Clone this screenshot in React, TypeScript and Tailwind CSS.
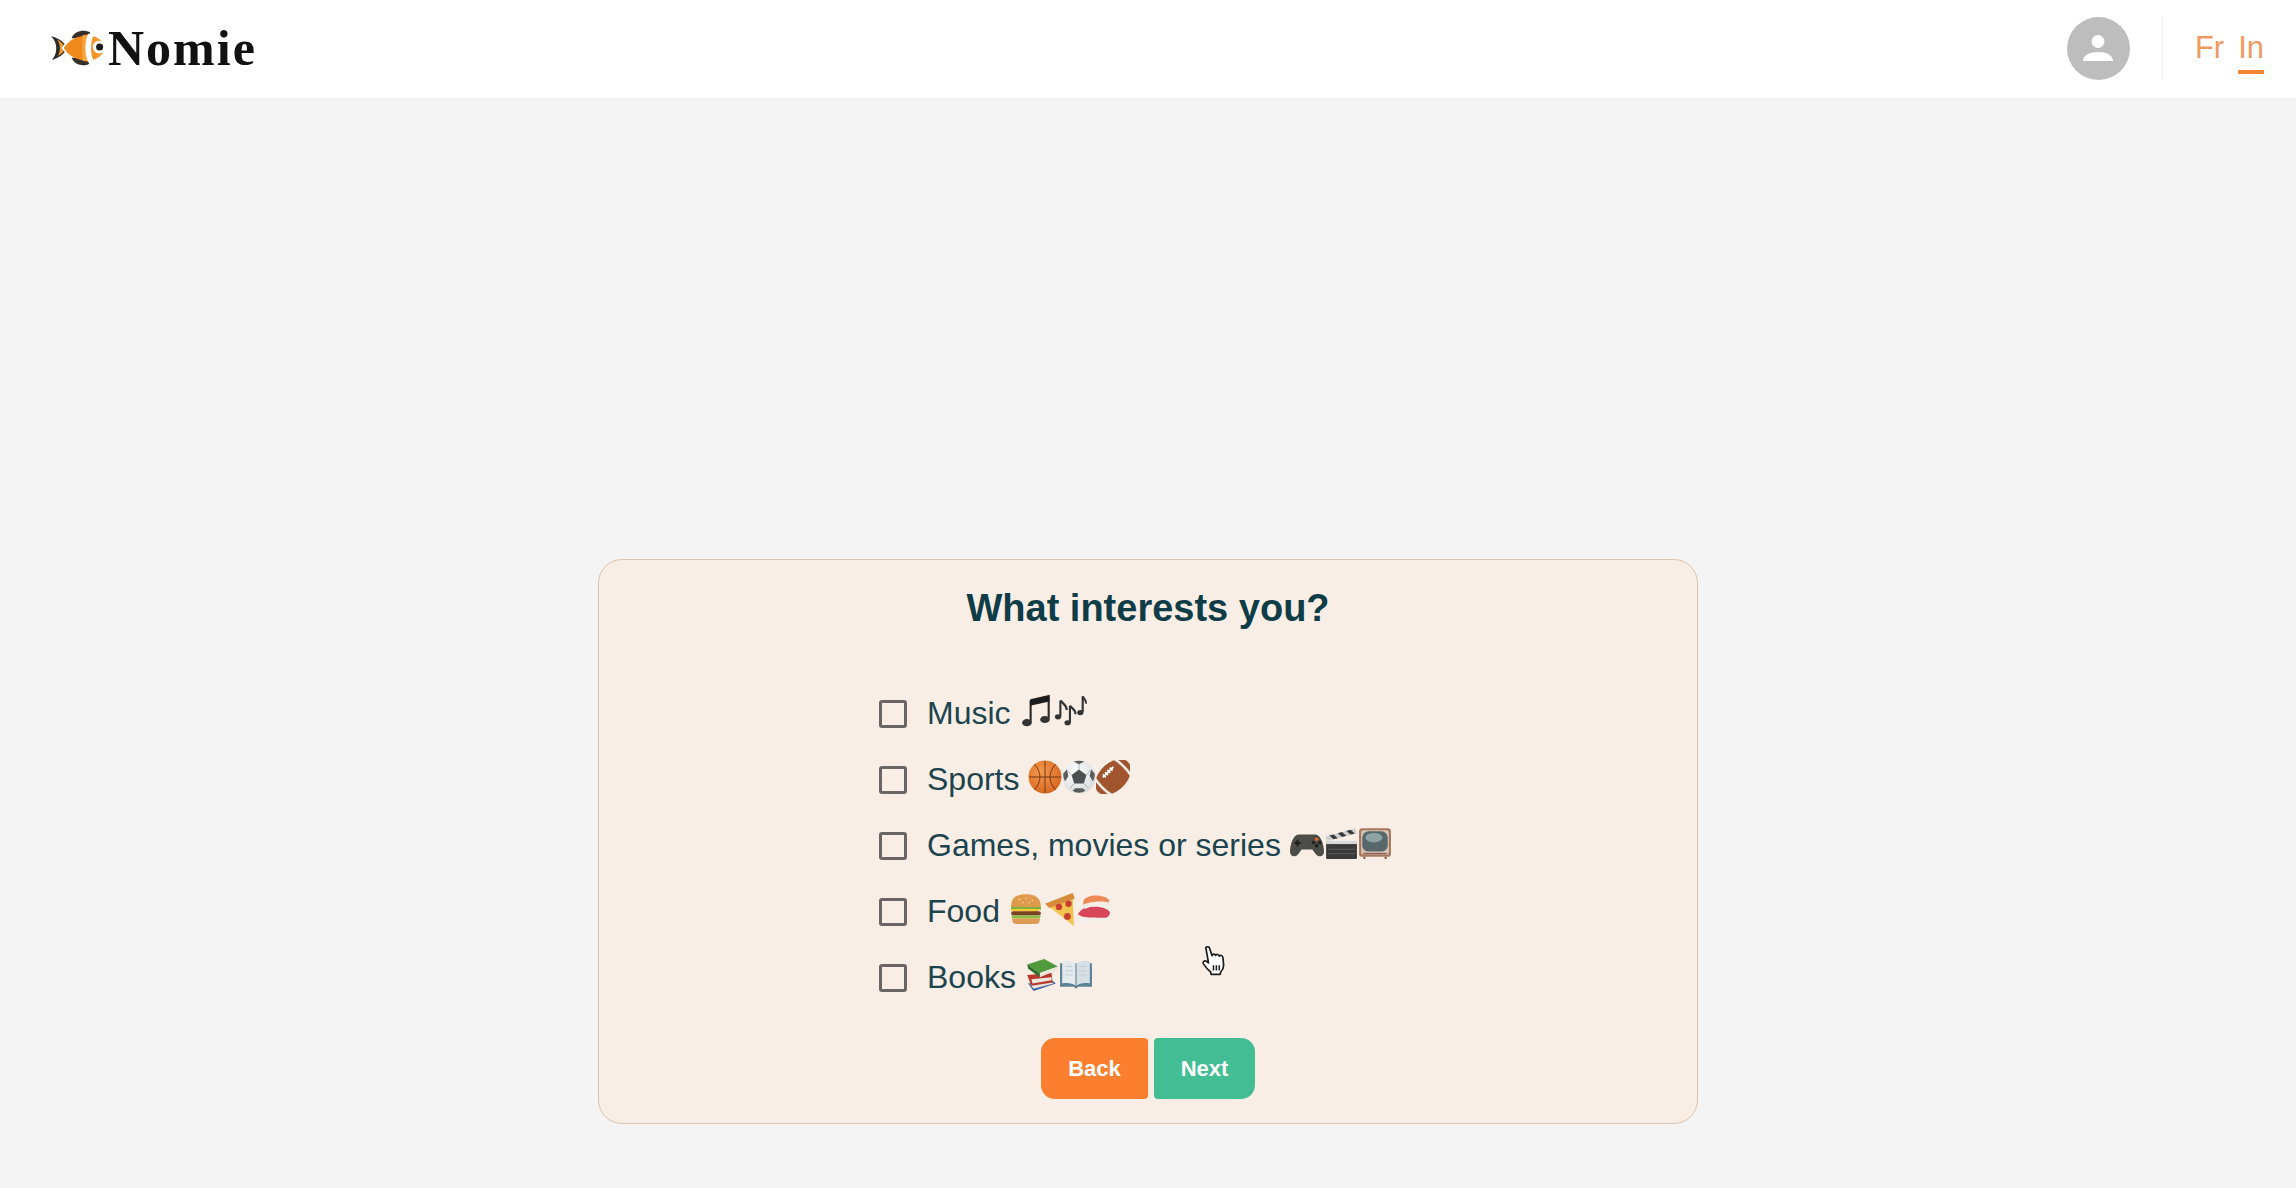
import type { ReactNode } from 'react';

function Emoji({ children }: { children: ReactNode }) {
  return (
    <svg viewBox="0 0 32 32" className="w-[34px] h-[34px] shrink-0">
      {children}
    </svg>
  );
}

const MusicNote = () => (
  <Emoji>
    <path d="M10 6 L27 2 V23" fill="none" stroke="#2a2a2a" strokeWidth="2" />
    <path d="M10 6 V27" stroke="#2a2a2a" strokeWidth="2" />
    <path d="M9.5 5.5 L27.5 1.5 V7 L9.5 11 Z" fill="#1c1c1c" />
    <ellipse cx="6.5" cy="27" rx="4.5" ry="3.4" fill="#333" />
    <ellipse cx="23.5" cy="24" rx="4.5" ry="3.4" fill="#333" />
  </Emoji>
);

const MusicNotes = () => (
  <Emoji>
    <path d="M6 6 V21 M6 6 C8 9 12 10 12 15" fill="none" stroke="#333" strokeWidth="2" />
    <ellipse cx="3.8" cy="21.5" rx="3" ry="2.4" fill="#333" />
    <path d="M15 11 V27 M15 11 C17 14 21 15 20 19" fill="none" stroke="#333" strokeWidth="2" />
    <ellipse cx="12.8" cy="27" rx="3" ry="2.4" fill="#333" />
    <path d="M27 2 V17 M27 2 C28 5 31 6 30 9" fill="none" stroke="#333" strokeWidth="2" />
    <ellipse cx="24.8" cy="17.5" rx="3" ry="2.4" fill="#333" />
  </Emoji>
);

const Basketball = () => (
  <Emoji>
    <defs>
      <radialGradient id="bball" cx="40%" cy="35%" r="70%">
        <stop offset="0%" stopColor="#f59a4e" />
        <stop offset="100%" stopColor="#d9651f" />
      </radialGradient>
    </defs>
    <circle cx="16" cy="16" r="15.5" fill="url(#bball)" />
    <g fill="none" stroke="#6b3416" strokeWidth="0.9">
      <path d="M1 16 H31 M16 1 V31" />
      <path d="M6 4 C13 11 13 21 6 28" />
      <path d="M26 4 C19 11 19 21 26 28" />
    </g>
  </Emoji>
);

const Soccer = () => (
  <Emoji>
    <defs>
      <radialGradient id="sball" cx="40%" cy="35%" r="75%">
        <stop offset="0%" stopColor="#ffffff" />
        <stop offset="100%" stopColor="#d4d6d6" />
      </radialGradient>
    </defs>
    <circle cx="16" cy="16" r="15.5" fill="url(#sball)" />
    <path d="M16 9 L23 14 L20.5 22 H11.5 L9 14 Z" fill="#4d4f50" />
    <path d="M11 1.5 C14 0.5 18 0.5 21 1.5 L16 4 Z M1.2 13 L4.5 9 L6 15 L3 20 C1.5 18 1 15 1.2 13 Z M30.8 13 L27.5 9 L26 15 L29 20 C30.5 18 31 15 30.8 13 Z M10 29 L12.5 26.5 H19.5 L22 29 C18 31.5 14 31.5 10 29 Z" fill="#5a5c5d" />
    <path d="M16 4 V9 M9 14 L4.5 9 M23 14 L27.5 9 M11.5 22 L8 26 M20.5 22 L24 26" stroke="#9d9f9f" strokeWidth="0.7" />
  </Emoji>
);

const Football = () => (
  <Emoji>
    <g transform="rotate(-45 16 16)">
      <ellipse cx="16" cy="16" rx="20" ry="13" fill="#a0552f" />
      <path d="M3 5.5 C1.5 11 1.5 21 3 26.5 M29 5.5 C30.5 11 30.5 21 29 26.5" fill="none" stroke="#f3ece4" strokeWidth="2.4" />
      <path d="M9 9.5 H23" stroke="#fff" strokeWidth="1.6" />
      <path d="M11 7.5 V11.5 M14 7.5 V11.5 M17 7.5 V11.5 M20 7.5 V11.5" stroke="#fff" strokeWidth="1.4" />
    </g>
  </Emoji>
);

const Controller = () => (
  <Emoji>
    <path d="M8 8 H24 C29 8 32 18 32 24 C32 29 27 30 24 26 L21 22 H11 L8 26 C5 30 0 29 0 24 C0 18 3 8 8 8 Z" fill="#4c4c48" />
    <path d="M7 13 V19 M4 16 H10" stroke="#1f1f1f" strokeWidth="2" />
    <circle cx="25" cy="12.5" r="1.7" fill="#e0662a" />
    <circle cx="25" cy="18.5" r="1.7" fill="#222" />
    <circle cx="22" cy="15.5" r="1.7" fill="#222" />
    <circle cx="28" cy="15.5" r="1.7" fill="#222" />
  </Emoji>
);

const Clapper = () => (
  <Emoji>
    <rect x="2" y="14" width="29" height="17" rx="1" fill="#3a3a3a" />
    <path d="M2 14 H31 V17 H2 Z" fill="#d8d8d8" />
    <path d="M1 10 L29 2 L31 7 L3 14 Z" fill="#cfcfcf" />
    <path d="M5 9 L9 12.5 L13 11.5 L9 8 Z M13 6.8 L17 10.3 L21 9.2 L17 5.7 Z M21 4.6 L25 8 L29 7 L25 3.5 Z" fill="#3a3a3a" />
    <path d="M4 22 H29 M4 26 H29" stroke="#555" strokeWidth="1" />
  </Emoji>
);

const Television = () => (
  <Emoji>
    <rect x="1" y="2" width="30" height="27" rx="3" fill="#a8775f" />
    <rect x="3" y="4" width="26" height="23" rx="2" fill="#d9c5b6" />
    <rect x="4" y="5" width="24" height="19" rx="6" fill="#56686a" />
    <ellipse cx="15" cy="11" rx="8" ry="4.5" fill="#8fa3a3" />
    <path d="M5 26 H27" stroke="#8a5f4a" strokeWidth="1.5" />
    <path d="M6 29 V31 M26 29 V31" stroke="#8a5f4a" strokeWidth="2" />
  </Emoji>
);

const Burger = () => (
  <Emoji>
    <path d="M2 14 C2 4 9 2 16 2 C23 2 30 4 30 14 Z" fill="#e09a4c" />
    <path d="M2 14 H30 V17 H2 Z" fill="#7fb13f" />
    <path d="M2 16 H30 L24 20 L18 18 H2 Z" fill="#f6c92f" />
    <rect x="2" y="18" width="28" height="4" rx="2" fill="#7a4324" />
    <path d="M2 22 H30 L29 25 H3 Z" fill="#8ebf45" />
    <path d="M3 25 H29 V26 C29 29 27 30 25 30 H7 C5 30 3 29 3 26 Z" fill="#dd9a52" />
    <g fill="#f5e2b8">
      <circle cx="10" cy="7" r="0.7" />
      <circle cx="16" cy="6" r="0.7" />
      <circle cx="22" cy="8" r="0.7" />
      <circle cx="13" cy="10" r="0.7" />
      <circle cx="19" cy="10" r="0.7" />
    </g>
  </Emoji>
);

const Pizza = () => (
  <Emoji>
    <path d="M2 11 L28 1 L29 32 Z" fill="#f2c44f" />
    <path d="M2 11 L28 1 L30 6 L6 15 Z" fill="#d88a3d" />
    <circle cx="15" cy="14" r="3" fill="#c9402f" />
    <circle cx="24" cy="11" r="3" fill="#c9402f" />
    <circle cx="23" cy="23" r="3.2" fill="#c9402f" />
  </Emoji>
);

const Sushi = () => (
  <Emoji>
    <ellipse cx="16" cy="24" rx="15" ry="5" fill="#f3f0ea" />
    <path d="M1 21 C4 12 26 12 31 19 C31 26 24 24 16 24 C10 24 4 24 1 21 Z" fill="#d9455a" />
    <path d="M6 8 C10 2 24 2 30 7 L30 10 C24 8 12 9 6 12 Z" fill="#ee8a55" />
    <path d="M6 13 C12 9 24 9 30 11 L29 14 C22 12 12 13 8 16 Z" fill="#f4efe6" />
  </Emoji>
);

const BookStack = () => (
  <Emoji>
    <path d="M3 24 L24 20 L29 24 L8 31 Z" fill="#3d5ea8" />
    <path d="M5 25 L24 22 L27 24 L8 29 Z" fill="#e8e4da" />
    <path d="M2 16 L25 14 L26 23 L6 26 Z" fill="#b8392f" />
    <path d="M6 20 L25 18 L25 21 L7 24 Z" fill="#ece7dc" />
    <path d="M2 6 L18 1 L31 8 L14 14 Z" fill="#4f9a3c" />
    <path d="M2 6 L14 14 V18 L3 10 Z" fill="#2f6d29" />
    <path d="M14 14 L31 8 V11 L14 18 Z" fill="#ece7dc" />
  </Emoji>
);

const OpenBook = () => (
  <Emoji>
    <path d="M1 5 H31 V27 H18 L16 29 L14 27 H1 Z" fill="#5a8197" />
    <path d="M3 3 C8 2 13 3 15.5 5 V26 C13 24 8 23 3 24 Z" fill="#e4e9ec" />
    <path d="M29 3 C24 2 19 3 16.5 5 V26 C19 24 24 23 29 24 Z" fill="#d8dfe4" />
    <path d="M6 8 H13 M6 12 H13 M6 16 H13 M19 8 H26 M19 12 H26 M19 16 H26" stroke="#c5ced4" strokeWidth="1" />
  </Emoji>
);

const interests: { label: string; icons: ReactNode }[] = [
  { label: 'Music', icons: <><MusicNote /><MusicNotes /></> },
  { label: 'Sports', icons: <><Basketball /><Soccer /><Football /></> },
  { label: 'Games, movies or series', icons: <><Controller /><Clapper /><Television /></> },
  { label: 'Food', icons: <><Burger /><Pizza /><Sushi /></> },
  { label: 'Books', icons: <><BookStack /><OpenBook /></> },
];

function FishLogo() {
  return (
    <svg viewBox="0 0 58 38" className="w-[57px] h-[38px]">
      <path d="M1 7 C6 8 12 11 15 15 L11 19 L15 23 C12 27 6 30 2 31 C8 25 8 13 1 7 Z" fill="#2f2a26" />
      <path d="M7 10 C10 12 13 14 14 16 L11 19 L14 22 C13 24 10 26 8 27 C11 22 11 15 7 10 Z" fill="#ee9a2e" />
      <path d="M22 9 C25 1 35 0 41 3 L38 9 Z M22 29 C25 37 35 38 40 35 L37 29 Z" fill="#37302b" />
      <path d="M14 19 C21 8 33 5 42 7 L42 31 C33 33 21 30 14 19 Z" fill="#f08a1d" />
      <path d="M33 6 L40 5 C36 12 36 26 40 33 L33 32 Z" fill="#f7a53a" />
      <path d="M39 4.5 C49 5 57 12 57 19 C57 26 49 33 39 33.5 C35 26 35 12 39 4.5 Z" fill="#fff" />
      <path d="M44 7 C41 13 41 25 44 31 C51 29 55 24 55 19 C55 14 51 9 44 7 Z" fill="#f39527" />
      <circle cx="50" cy="18" r="6.5" fill="#fff" />
      <circle cx="50.5" cy="18" r="3.6" fill="#1c1c1c" />
    </svg>
  );
}

function HandCursor() {
  return (
    <svg viewBox="0 0 24 32" className="absolute left-[1202px] top-[945px] w-[23px] h-[31px]">
      <path
        d="M4 2.5 C5.5 1 7.5 1.6 8 3.5 L10.5 11 C11 8.8 13.6 8.8 14.3 10.8 C15 9.2 17.4 9.4 18 11.4 C19 10.2 21.4 10.6 21.8 12.8 L22.5 20 C22.8 24 21.5 26 19.5 28 L19 30.5 H9.5 L9 28 C6.5 26 3.5 22.5 1.5 19.5 C0.5 17.5 2.5 15.5 4.5 16.8 L6.8 18.5 Z"
        fill="#fff"
        stroke="#1f1f1f"
        strokeWidth="1.8"
        strokeLinejoin="round"
      />
      <path d="M12 21 V26.5 M15 21 V26.5 M18 21 V26.5" stroke="#1f1f1f" strokeWidth="1.6" />
    </svg>
  );
}

export default function App() {
  return (
    <div className="relative h-[1188px] flex flex-col bg-[#f4f4f4] font-['Liberation_Sans',Arial,sans-serif]">
      {/* Header */}
      <header className="h-[98px] shrink-0 bg-white flex items-center justify-between pl-[50px] pr-[32px]">
        <div className="flex items-center gap-[1px] -translate-y-[1px]">
          <FishLogo />
          <span className="font-['Liberation_Serif',serif] font-bold text-[50px] leading-none tracking-[2px] text-[#111]">
            Nomie
          </span>
        </div>
        <div className="flex items-center">
          <div className="w-[63px] h-[63px] rounded-full bg-[#bdbdbd] flex items-center justify-center -translate-y-[1px]">
            <svg viewBox="0 0 32 32" className="w-[32px] h-[32px]">
              <circle cx="16" cy="9.5" r="6.5" fill="#fff" />
              <path d="M1 29 C1 23 8 20 16 20 C24 20 31 23 31 29 Z" fill="#fff" />
            </svg>
          </div>
          <div className="w-[1px] h-[62px] bg-[#eeeeee] ml-[32px] mr-[32px]" />
          <div className="flex items-center gap-[14px] text-[31px] leading-none text-[#f09a63]">
            <span className="py-[7px] border-b-[4px] border-transparent">Fr</span>
            <span className="py-[7px] border-b-[4px] border-[#f58634]">In</span>
          </div>
        </div>
      </header>

      {/* Question card */}
      <main className="flex-1 flex items-end justify-center pb-[64px]">
        <div className="w-[1100px] h-[565px] rounded-[24px] border border-[#dcc3ae] bg-[#f8eee6] flex flex-col items-center">
          <h2 className="mt-[27px] text-[38px] leading-[42px] font-bold text-[#0f3d47]">
            What interests you?
          </h2>
          <ul className="mt-[67px] pl-[280px] flex flex-col gap-[32px] whitespace-nowrap self-start">
            {interests.map((item) => (
              <li key={item.label} className="h-[34px] flex items-center">
                <span className="w-[28px] h-[28px] shrink-0 rounded-[3px] border-[3px] border-[#6b6665] translate-y-[1px]" />
                <span className="ml-[20px] text-[32px] leading-none text-[#1c444e]">
                  {item.label}
                </span>
                <span className="ml-[9px] flex items-center -translate-y-[2px]">{item.icons}</span>
              </li>
            ))}
          </ul>
          <div className="mt-[44px] flex gap-[6px]">
            <button className="w-[107px] h-[61px] rounded-l-[14px] rounded-r-[4px] bg-[#fc7f2f] text-white text-[22px] font-bold">
              Back
            </button>
            <button className="w-[101px] h-[61px] rounded-r-[14px] rounded-l-[4px] bg-[#43bd94] text-white text-[22px] font-bold">
              Next
            </button>
          </div>
        </div>
      </main>

      {/* Mouse pointer from the recording */}
      <HandCursor />
    </div>
  );
}
